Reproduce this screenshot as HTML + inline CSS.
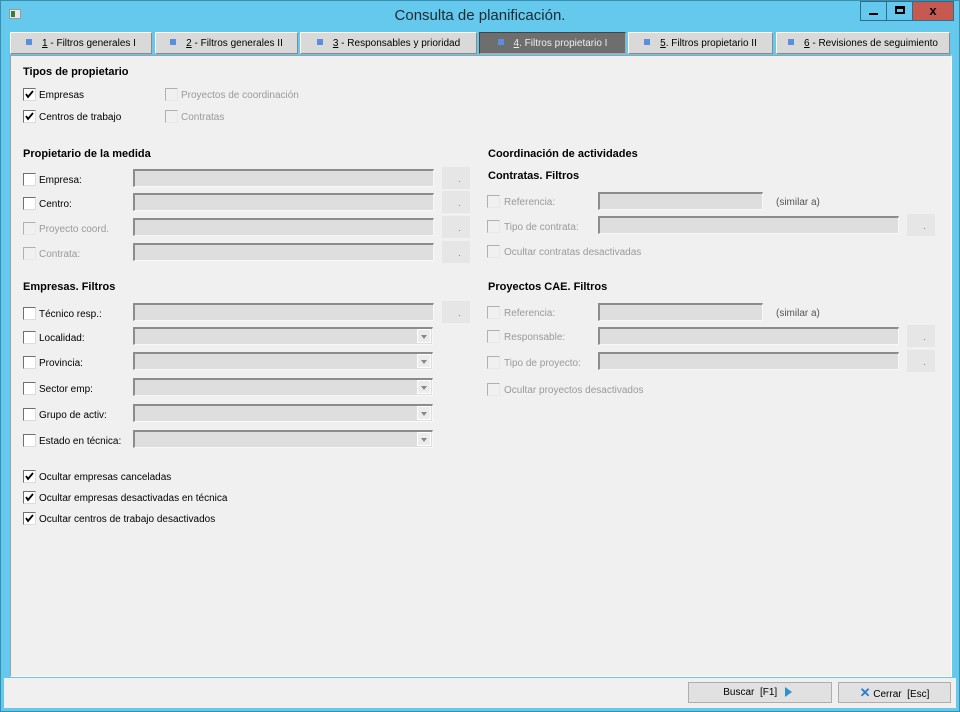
<!DOCTYPE html>
<html><head><meta charset="utf-8"><style>
*{box-sizing:border-box;margin:0;padding:0}
body{width:960px;height:712px;background:#64c9ec;font-family:"Liberation Sans",Arial,sans-serif;font-size:10px;color:#000;position:relative;overflow:hidden}
.a{position:absolute}
.win{left:0;top:0;width:960px;height:712px;border:1px solid #3a8fb0}
.title{left:0;top:7px;width:960px;text-align:center;font-size:15px;color:#1c2a33}
.tab{height:22px;top:32px;background:#d9d9d9;border:1px solid #fff;border-right-color:#8a8a8a;border-bottom-color:#8a8a8a;text-align:center;line-height:21px;font-size:10px;white-space:nowrap}
.tab i{display:inline-block;width:6px;height:6px;background:#5a8fe0;margin-right:10px;vertical-align:1px}
.tab.sel{background:#6e6e6e;color:#eee;border-color:#444 #aaa #aaa #444}
.panel{left:10px;top:55px;width:942px;height:622px;background:#f0f0f0;border:1px solid #a0a0a0;border-right-color:#fff;border-bottom-color:#fff}
.bot{left:4px;top:678px;width:952px;height:30px;background:#f0f0f0}
.h{font-weight:bold;font-size:11px}
.cb{width:13px;height:13px;background:#fff;border:1px solid #707070;border-right-color:#dcdcdc;border-bottom-color:#dcdcdc}
.cb.d{background:#f0f0f0;border-color:#b0b0b0 #e8e8e8 #e8e8e8 #b0b0b0}
.cb svg{position:absolute;left:1px;top:1px}
.lb{white-space:nowrap;line-height:13px;margin-top:1px}
.lb.d{color:#9a9a9a}
.tb{height:18px;background:#dedede;border:1px solid #f8f8f8;border-top:2px solid #8c8c8c;border-left:2px solid #8c8c8c}
.bt{width:28px;height:22px;background:#e6e6e6}
.bt:after{content:"";position:absolute;right:10px;bottom:7px;width:1px;height:1px;background:#888}
.dd{width:14px;height:14px;right:1px;top:0px;background:#ececec;border:1px solid #fff}
.dd:after{content:"";position:absolute;left:3px;top:5px;border:3px solid transparent;border-top:4px solid #888}
.btn{top:682px;height:21px;background:#e1e1e1;border:1px solid #adadad;text-align:center;line-height:19px;font-size:10px}
.wb{top:1px;height:20px;border:1px solid #2d6f8a}
</style></head><body>
<div class="a win"></div>
<div class="a" style="left:9px;top:9px;width:12px;height:10px;background:#e8e8e8;border:1px solid #999"><div class="a" style="left:1px;top:1px;width:4px;height:6px;background:#3a7a3a"></div></div>
<div class="a title">Consulta de planificación.</div>
<div class="a wb" style="left:860px;width:27px;background:#64c9ec"><div class="a" style="left:8px;top:11px;width:9px;height:2px;background:#000"></div></div>
<div class="a wb" style="left:886px;width:27px;background:#64c9ec"><div class="a" style="left:8px;top:4px;width:10px;height:8px;border:2px solid #000;border-top-width:3px"></div></div>
<div class="a wb" style="left:912px;width:42px;background:#c75a50;text-align:center;font-weight:bold;font-size:13px;line-height:17px">x</div>

<div class="a tab" style="left:10px;width:142px"><i></i><u>1</u> - Filtros generales I</div>
<div class="a tab" style="left:155px;width:143px"><i></i><u>2</u> - Filtros generales II</div>
<div class="a tab" style="left:300px;width:177px"><i></i><u>3</u> - Responsables y prioridad</div>
<div class="a tab sel" style="left:479px;width:147px"><i></i><u>4</u>. Filtros propietario I</div>
<div class="a tab" style="left:628px;width:145px"><i></i><u>5</u>. Filtros propietario II</div>
<div class="a tab" style="left:776px;width:174px"><i></i><u>6</u> - Revisiones de seguimiento</div>

<div class="a panel"></div>
<div class="a bot"></div>

<div class="a h" style="left:23px;top:66px">Tipos de propietario</div>
<div class="a h" style="left:23px;top:148px">Propietario de la medida</div>
<div class="a h" style="left:23px;top:281px">Empresas. Filtros</div>
<div class="a h" style="left:488px;top:148px">Coordinación de actividades</div>
<div class="a h" style="left:488px;top:170px">Contratas. Filtros</div>
<div class="a h" style="left:488px;top:281px">Proyectos CAE. Filtros</div>

<div class="a cb" style="left:23px;top:88px"><svg width="9" height="9"><path d="M1 4 L3 7 L8 1" stroke="#000" stroke-width="1.8" fill="none"/></svg></div><div class="a lb" style="left:39px;top:88px">Empresas</div>
<div class="a cb" style="left:23px;top:110px"><svg width="9" height="9"><path d="M1 4 L3 7 L8 1" stroke="#000" stroke-width="1.8" fill="none"/></svg></div><div class="a lb" style="left:39px;top:110px">Centros de trabajo</div>
<div class="a cb d" style="left:165px;top:88px"></div><div class="a lb d" style="left:181px;top:88px">Proyectos de coordinación</div>
<div class="a cb d" style="left:165px;top:110px"></div><div class="a lb d" style="left:181px;top:110px">Contratas</div>

<div class="a cb" style="left:23px;top:173px"></div><div class="a lb" style="left:39px;top:173px">Empresa:</div>
<div class="a tb" style="left:133px;top:169px;width:301px"></div><div class="a bt" style="left:442px;top:167px"></div>
<div class="a cb" style="left:23px;top:197px"></div><div class="a lb" style="left:39px;top:197px">Centro:</div>
<div class="a tb" style="left:133px;top:193px;width:301px"></div><div class="a bt" style="left:442px;top:191px"></div>
<div class="a cb d" style="left:23px;top:222px"></div><div class="a lb d" style="left:39px;top:222px">Proyecto coord.</div>
<div class="a tb" style="left:133px;top:218px;width:301px"></div><div class="a bt" style="left:442px;top:216px"></div>
<div class="a cb d" style="left:23px;top:247px"></div><div class="a lb d" style="left:39px;top:247px">Contrata:</div>
<div class="a tb" style="left:133px;top:243px;width:301px"></div><div class="a bt" style="left:442px;top:241px"></div>

<div class="a cb" style="left:23px;top:307px"></div><div class="a lb" style="left:39px;top:307px">Técnico resp.:</div>
<div class="a tb" style="left:133px;top:303px;width:301px"></div><div class="a bt" style="left:442px;top:301px"></div>

<div class="a cb" style="left:23px;top:331px"></div><div class="a lb" style="left:39px;top:331px">Localidad:</div>
<div class="a tb" style="left:133px;top:327px;width:300px"><div class="a dd"></div></div>
<div class="a cb" style="left:23px;top:356px"></div><div class="a lb" style="left:39px;top:356px">Provincia:</div>
<div class="a tb" style="left:133px;top:352px;width:300px"><div class="a dd"></div></div>
<div class="a cb" style="left:23px;top:382px"></div><div class="a lb" style="left:39px;top:382px">Sector emp:</div>
<div class="a tb" style="left:133px;top:378px;width:300px"><div class="a dd"></div></div>
<div class="a cb" style="left:23px;top:408px"></div><div class="a lb" style="left:39px;top:408px">Grupo de activ:</div>
<div class="a tb" style="left:133px;top:404px;width:300px"><div class="a dd"></div></div>
<div class="a cb" style="left:23px;top:434px"></div><div class="a lb" style="left:39px;top:434px">Estado en técnica:</div>
<div class="a tb" style="left:133px;top:430px;width:300px"><div class="a dd"></div></div>

<div class="a cb" style="left:23px;top:470px"><svg width="9" height="9"><path d="M1 4 L3 7 L8 1" stroke="#000" stroke-width="1.8" fill="none"/></svg></div><div class="a lb" style="left:39px;top:470px">Ocultar empresas canceladas</div>
<div class="a cb" style="left:23px;top:491px"><svg width="9" height="9"><path d="M1 4 L3 7 L8 1" stroke="#000" stroke-width="1.8" fill="none"/></svg></div><div class="a lb" style="left:39px;top:491px">Ocultar empresas desactivadas en técnica</div>
<div class="a cb" style="left:23px;top:512px"><svg width="9" height="9"><path d="M1 4 L3 7 L8 1" stroke="#000" stroke-width="1.8" fill="none"/></svg></div><div class="a lb" style="left:39px;top:512px">Ocultar centros de trabajo desactivados</div>

<div class="a cb d" style="left:487px;top:195px"></div><div class="a lb d" style="left:504px;top:195px">Referencia:</div>
<div class="a tb" style="left:598px;top:192px;width:165px"></div><div class="a lb" style="left:776px;top:195px;color:#555">(similar a)</div>
<div class="a cb d" style="left:487px;top:220px"></div><div class="a lb d" style="left:504px;top:220px">Tipo de contrata:</div>
<div class="a tb" style="left:598px;top:216px;width:301px"></div><div class="a bt" style="left:907px;top:214px"></div>
<div class="a cb d" style="left:487px;top:245px"></div><div class="a lb d" style="left:504px;top:245px">Ocultar contratas desactivadas</div>

<div class="a cb d" style="left:487px;top:306px"></div><div class="a lb d" style="left:504px;top:306px">Referencia:</div>
<div class="a tb" style="left:598px;top:303px;width:165px"></div><div class="a lb" style="left:776px;top:306px;color:#555">(similar a)</div>
<div class="a cb d" style="left:487px;top:330px"></div><div class="a lb d" style="left:504px;top:330px">Responsable:</div>
<div class="a tb" style="left:598px;top:327px;width:301px"></div><div class="a bt" style="left:907px;top:325px"></div>
<div class="a cb d" style="left:487px;top:356px"></div><div class="a lb d" style="left:504px;top:356px">Tipo de proyecto:</div>
<div class="a tb" style="left:598px;top:352px;width:301px"></div><div class="a bt" style="left:907px;top:350px"></div>
<div class="a cb d" style="left:487px;top:383px"></div><div class="a lb d" style="left:504px;top:383px">Ocultar proyectos desactivados</div>

<div class="a btn" style="left:688px;width:144px">Buscar &nbsp;[F1] &nbsp;<span style="display:inline-block;border:5px solid transparent;border-left:7px solid #2f8fd0;vertical-align:-2px;margin-left:2px"></span></div>
<div class="a btn" style="left:838px;width:113px"><span style="color:#2a7ad0;font-weight:bold;font-size:13px">✕</span> Cerrar &nbsp;[Esc]</div>
</body></html>
